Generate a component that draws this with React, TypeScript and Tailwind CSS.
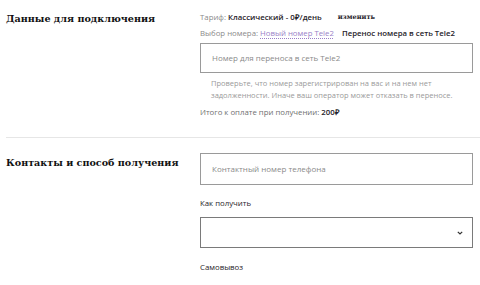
export default function App() {
  return (
    <div className="w-[480px] h-[285px] overflow-hidden bg-white text-[#1f2229] font-['Open_Sans',sans-serif]">
      {/* Section 1: connection data */}
      <section className="flex pt-[11px]">
        <h2 className="w-[200px] shrink-0 whitespace-nowrap pl-[6px] font-['DejaVu_Serif',serif] text-[9.6px] font-bold leading-[16px] text-[#111]">
          Данные для подключения
        </h2>
        <div className="w-[273px]">
          <div className="flex h-[12px] items-center whitespace-nowrap text-[7.8px] leading-[12px]">
            <span className="text-[#8a8a8a]">Тариф:&nbsp;</span>
            <span className="font-semibold">Классический - 0₽/день</span>
            <span className="ml-auto mr-[98px] font-['DejaVu_Serif',serif] text-[6.6px] font-bold">изменить</span>
          </div>
          <div className="mt-[4px] flex h-[12px] items-center whitespace-nowrap text-[7.8px] leading-[12px]">
            <span className="text-[#8a8a8a]">Выбор номера:&nbsp;</span>
            <span className="text-[#9a7fc8] underline decoration-dotted underline-offset-2">Новый номер Tele2</span>
            <span className="ml-[8px] font-semibold">Перенос номера в сеть Tele2</span>
          </div>
          <div className="mt-[4px] flex h-[30px] items-center border border-[#9a9a9a] px-[11px] text-[8px] text-[#8a8a8a]">
            Номер для переноса в сеть Tele2
          </div>
          <p className="mt-[4px] pl-[11px] pr-[20px] text-[7.5px] leading-[12px] text-[#9a9a9a]">
            Проверьте, что номер зарегистрирован на вас и на нем нет задолженности. Иначе ваш оператор может отказать в переносе.
          </p>
          <div className="mt-[5px] h-[12px] whitespace-nowrap text-[7.8px] leading-[12px]">
            <span className="text-[#6f6f6f]">Итого к оплате при получении: </span>
            <span className="font-semibold">200₽</span>
          </div>
        </div>
      </section>

      <div className="ml-[6px] mt-[19px] border-t border-[#e6e6e6]" />

      {/* Section 2: contacts */}
      <section className="flex pt-[15px]">
        <h2 className="w-[200px] shrink-0 whitespace-nowrap pl-[6px] pt-[2px] font-['DejaVu_Serif',serif] text-[9.6px] font-bold leading-[16px] text-[#111]">
          Контакты и способ получения
        </h2>
        <div className="w-[273px]">
          <div className="flex h-[32px] items-center border border-[#9a9a9a] px-[11px] text-[8px] text-[#8a8a8a]">
            Контактный номер телефона
          </div>
          <div className="mt-[12px] h-[12px] text-[7.8px] leading-[12px]">Как получить</div>
          <div className="mt-[8px] flex h-[31px] items-center justify-end border border-[#7a7a7a] pr-[9px]">
            <svg width="6" height="4" viewBox="0 0 6 4" fill="none" stroke="#333" strokeWidth="1.2">
              <path d="M0.8 0.8l2.2 2.2 2.2-2.2" />
            </svg>
          </div>
          <div className="mt-[13px] h-[12px] text-[7.8px] leading-[12px]">Самовывоз</div>
        </div>
      </section>
    </div>
  )
}
